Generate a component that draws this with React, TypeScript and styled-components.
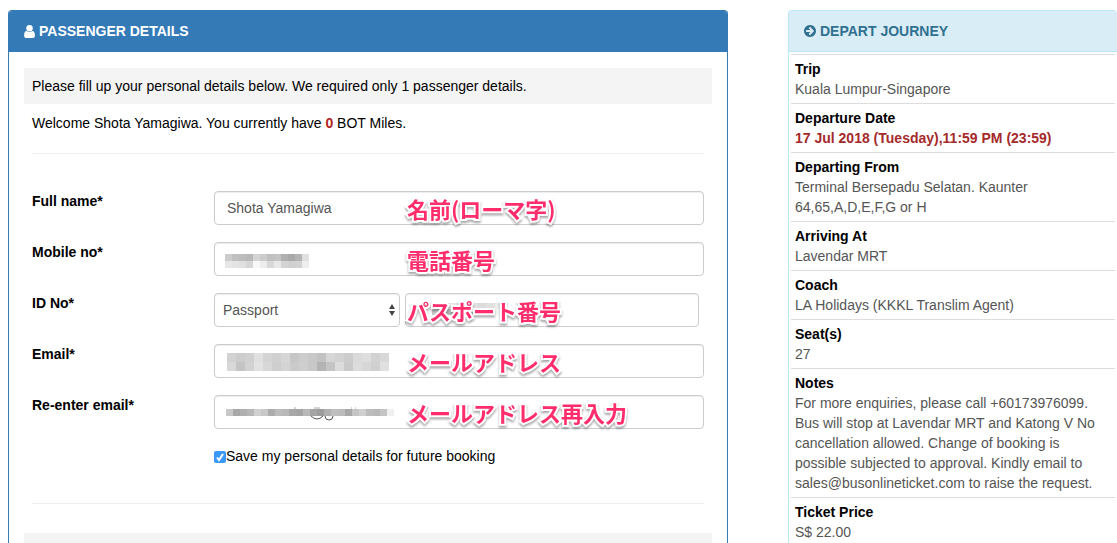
import React from "react";
import styled, { createGlobalStyle, css } from "styled-components";

const GlobalStyle = createGlobalStyle`
  *, *::before, *::after { box-sizing: border-box; }
  body {
    margin: 0;
    background: #fff;
    color: #000;
    font: 14px/20px "Liberation Sans", Arial, "Noto Sans CJK JP", sans-serif;
  }
`;

const Page = styled.main`
  display: grid;
  grid-template-columns: 720fr 329fr;
  column-gap: 60px;
  padding: 10px 0 0 8px;
  height: 100vh;
  overflow: hidden;
`;

const Panel = styled.section<{ $tone: "primary" | "info" }>`
  border: 1px solid ${(p) => (p.$tone === "primary" ? "#337ab7" : "#bce8f1")};
  border-bottom: 0;
  border-radius: 4px 4px 0 0;
  ${(p) => p.$tone === "info" && css`border-right: 0;`}
`;

const PanelHeader = styled.h2<{ $tone: "primary" | "info" }>`
  display: flex;
  align-items: center;
  gap: 4px;
  margin: 0;
  padding: 10px 15px;
  font-size: 14px;
  line-height: 20px;
  text-transform: uppercase;
  border-radius: 3px 3px 0 0;
  border-bottom: 1px solid ${(p) => (p.$tone === "primary" ? "#337ab7" : "#bce8f1")};
  background: ${(p) => (p.$tone === "primary" ? "#337ab7" : "#d9edf7")};
  color: ${(p) => (p.$tone === "primary" ? "#fff" : "#31708f")};
`;

const PanelBody = styled.div`
  padding: 16px 15px 0;
`;

const Banner = styled.p`
  margin: 0;
  padding: 8px;
  min-height: 36px;
  background: #f4f4f4;
`;

const NextSection = styled.div`
  margin-top: 29px;
  min-height: 36px;
  background: #f4f4f4;
`;

const Welcome = styled.p`
  margin: 0;
  padding: 9px 8px 20px;
`;

const Accent = styled.strong`
  color: #b22222;
`;

const Rule = styled.hr`
  margin: 0 8px;
  border: 0;
  border-top: 1px solid #eee;
`;

const Form = styled.form`
  display: flex;
  flex-direction: column;
  gap: 17px;
  padding: 37px 8px;
`;

const FormRow = styled.div`
  display: grid;
  grid-template-columns: 182px 1fr;
  align-items: start;
`;

const FieldLabel = styled.label`
  font-weight: bold;
`;

const Field = styled.div<{ $inset?: boolean }>`
  position: relative;
  display: flex;
  gap: 5px;
  padding-right: ${(p) => (p.$inset ? "5px" : "0")};
`;

const controlStyle = css`
  height: 34px;
  border: 1px solid #ccc;
  border-radius: 4px;
  background: #fff;
  box-shadow: inset 0 1px 1px rgba(0, 0, 0, 0.075);
  color: #555;
  font: inherit;
`;

const TextInput = styled.input`
  ${controlStyle}
  flex: 1;
  min-width: 0;
  padding: 6px 12px;
`;

const SelectWrap = styled.div`
  position: relative;
  flex: 0 0 186px;
`;

const Select = styled.select`
  ${controlStyle}
  appearance: none;
  width: 100%;
  padding: 6px 8px;
`;

const SelectArrows = styled.svg`
  position: absolute;
  right: 4px;
  top: 11px;
  pointer-events: none;
`;

const Masked = styled.svg`
  position: absolute;
  pointer-events: none;
`;

const Note = styled.span`
  position: absolute;
  left: 193px;
  top: 1px;
  font: bold 22px/32px "Noto Sans CJK JP", sans-serif;
  color: #ff2d6b;
  white-space: nowrap;
  pointer-events: none;
  -webkit-text-stroke: 4px #fff;
  paint-order: stroke fill;
  filter: drop-shadow(0 2px 1px rgba(0, 0, 0, 0.35));
`;

const SaveRow = styled.label`
  display: flex;
  align-items: center;
  margin-left: 182px;
`;

const Tick = styled.input`
  appearance: none;
  width: 12px;
  height: 12px;
  margin: 0;
  border-radius: 2px;
  background: #3b99fc;
`;

const TickBox = styled.span`
  position: relative;
  display: flex;
  padding-top: 1px;
`;

const TickMark = styled.svg`
  position: absolute;
  left: 0;
  bottom: 0;
  pointer-events: none;
`;

const Journey = styled.dl`
  margin: 2px 2px 0;
`;

const JourneyItem = styled.div`
  padding: 4px;
  border-top: 1px solid #ddd;
`;

const Term = styled.dt`
  font-weight: bold;
`;

const Detail = styled.dd<{ $strong?: boolean }>`
  margin: 0;
  color: ${(p) => (p.$strong ? "#a52a2a" : "#555")};
  font-weight: ${(p) => (p.$strong ? "bold" : "normal")};
`;

function UserIcon() {
  return (
    <svg width="11" height="13" viewBox="0 0 1280 1536" fill="currentColor" aria-hidden>
      <path d="M1280 1271q0 109-62.5 187t-150.5 78h-854q-88 0-150.5-78t-62.5-187q0-85 8.5-160.5t31.5-152 58.5-131 94-89 134.5-34.5q131 128 313 128t313-128q76 0 134.5 34.5t94 89 58.5 131 31.5 152 8.5 160.5z" />
      <circle cx="640" cy="384" r="384" />
    </svg>
  );
}

function ArrowCircleIcon() {
  return (
    <svg width="12" height="12" viewBox="0 0 1536 1536" fill="currentColor" aria-hidden>
      <path
        fillRule="evenodd"
        d="M1285 768q0-27-18-45l-91-91-362-362q-18-18-45-18t-45 18l-91 91q-18 18-18 45t18 45l189 189h-502q-26 0-45 19t-19 45v128q0 26 19 45t45 19h502l-189 189q-19 19-19 45t19 45l91 91q18 18 45 18t45-18l362-362 91-91q18-18 18-45zm251 0q0 209-103 385.5t-279.5 279.5-385.5 103-385.5-103-279.5-279.5-103-385.5 103-385.5 279.5-279.5 385.5-103 385.5 103 279.5 279.5 103 385.5z"
      />
    </svg>
  );
}

interface MosaicProps {
  x: number;
  y: number;
  cell: number;
  cellHeight: number;
  rows: string[];
  children?: React.ReactNode;
}

/* Pixelated privacy mask; each hex pair is the grey of one cell. */
function Mosaic({ x, y, cell, cellHeight, rows, children }: MosaicProps) {
  const grid = rows.map((r) => r.split(" "));
  return (
    <Masked
      width={grid[0].length * cell}
      height={grid.length * cellHeight}
      overflow="visible"
      style={{ left: x, top: y }}
      aria-hidden
    >
      {grid.map((r, i) =>
        r.map((g, j) => (
          <rect
            key={`${i}-${j}`}
            x={j * cell}
            y={i * cellHeight}
            width={cell}
            height={cellHeight}
            fill={`#${g}${g}${g}`}
            shapeRendering="crispEdges"
          />
        ))
      )}
      {children}
    </Masked>
  );
}

const journey = [
  { term: "Trip", detail: "Kuala Lumpur-Singapore" },
  { term: "Departure Date", detail: "17 Jul 2018 (Tuesday),11:59 PM (23:59)", strong: true },
  { term: "Departing From", detail: "Terminal Bersepadu Selatan. Kaunter 64,65,A,D,E,F,G or H" },
  { term: "Arriving At", detail: "Lavendar MRT" },
  { term: "Coach", detail: "LA Holidays (KKKL Translim Agent)" },
  { term: "Seat(s)", detail: "27" },
  {
    term: "Notes",
    detail:
      "For more enquiries, please call +60173976099. Bus will stop at Lavendar MRT and Katong V No cancellation allowed. Change of booking is possible subjected to approval. Kindly email to sales@busonlineticket.com to raise the request.",
  },
  { term: "Ticket Price", detail: "S$ 22.00" },
];

export default function App() {
  return (
    <>
      <GlobalStyle />
      <Page>
        <Panel $tone="primary">
          <PanelHeader $tone="primary">
            <UserIcon />
            Passenger Details
          </PanelHeader>
          <PanelBody>
            <Banner>Please fill up your personal details below. We required only 1 passenger details.</Banner>
            <Welcome>
              Welcome Shota Yamagiwa. You currently have <Accent>0</Accent> BOT Miles.
            </Welcome>
            <Rule />
            <Form>
              <FormRow>
                <FieldLabel htmlFor="name">Full name*</FieldLabel>
                <Field>
                  <TextInput id="name" defaultValue="Shota Yamagiwa" />
                  <Note>名前(ローマ字)</Note>
                </Field>
              </FormRow>
              <FormRow>
                <FieldLabel htmlFor="mobile">Mobile no*</FieldLabel>
                <Field>
                  <TextInput id="mobile" type="tel" />
                  <Mosaic
                    x={11}
                    y={12}
                    cell={7}
                    cellHeight={7}
                    rows={["cc c0 bc b8 d4 cc c0 c4 b0 a8 b4 e0", "e6 e4 e0 d6 f8 ec d8 e8 d4 d0 d2 ee"]}
                  />
                  <Note>電話番号</Note>
                </Field>
              </FormRow>
              <FormRow>
                <FieldLabel htmlFor="idno">ID No*</FieldLabel>
                <Field $inset>
                  <SelectWrap>
                    <Select aria-label="ID type" defaultValue="Passport">
                      <option>Passport</option>
                    </Select>
                    <SelectArrows width="8" height="12" viewBox="0 0 8 12" fill="#444" aria-hidden>
                      <path d="M4 0 7 5H1zM4 12 1 7h6z" />
                    </SelectArrows>
                  </SelectWrap>
                  <TextInput id="idno" />
                  <Mosaic x={218} y={10} cell={9} cellHeight={6} rows={["f4 e8 e4 e8 e4 dc e0 ec", "c8 b8 c0 c4 d0 ec f0 f6"]} />
                  <Note>パスポート番号</Note>
                </Field>
              </FormRow>
              <FormRow>
                <FieldLabel htmlFor="email">Email*</FieldLabel>
                <Field>
                  <TextInput id="email" type="email" />
                  <Mosaic
                    x={13}
                    y={9}
                    cell={9}
                    cellHeight={9}
                    rows={[
                      "d2 cc d0 e0 d4 d0 d6 c6 cc c8 c2 d6 d2 cc da de d2 d8",
                      "d8 c4 d2 e2 d8 ce d4 ca ce c8 b4 c4 dc ca dc d6 d0 e0",
                    ]}
                  />
                  <Note>メールアドレス</Note>
                </Field>
              </FormRow>
              <FormRow>
                <FieldLabel htmlFor="email2">Re-enter email*</FieldLabel>
                <Field>
                  <TextInput id="email2" type="email" />
                  <Mosaic
                    x={12}
                    y={14}
                    cell={7}
                    cellHeight={7}
                    rows={["c8 a8 b0 b8 d0 c8 ac bc b8 a8 a4 b8 a4 9c b0 c0 bc a8 c4 d0 bc b8 c4 f0"]}
                  >
                    <path d="M85 7q6 6 12 0M99 7q0 4 4 4t4-4" fill="none" stroke="#555" />
                    <path d="M68-1h2M88-1h6M125-1h1M129-1h1" stroke="#aaa" />
                  </Mosaic>
                  <Note>メールアドレス再入力</Note>
                </Field>
              </FormRow>
              <SaveRow>
                <TickBox>
                  <Tick type="checkbox" defaultChecked />
                  <TickMark width="12" height="12" viewBox="0 0 12 12" fill="none" stroke="#fff" strokeWidth="2" aria-hidden>
                    <path d="M3 6.5 5 9 9 3" />
                  </TickMark>
                </TickBox>
                Save my personal details for future booking
              </SaveRow>
            </Form>
            <Rule />
            <NextSection />
          </PanelBody>
        </Panel>
        <Panel $tone="info">
          <PanelHeader $tone="info">
            <ArrowCircleIcon />
            Depart Journey
          </PanelHeader>
          <Journey>
            {journey.map((j) => (
              <JourneyItem key={j.term}>
                <Term>{j.term}</Term>
                <Detail $strong={j.strong}>{j.detail}</Detail>
              </JourneyItem>
            ))}
          </Journey>
        </Panel>
      </Page>
    </>
  );
}
